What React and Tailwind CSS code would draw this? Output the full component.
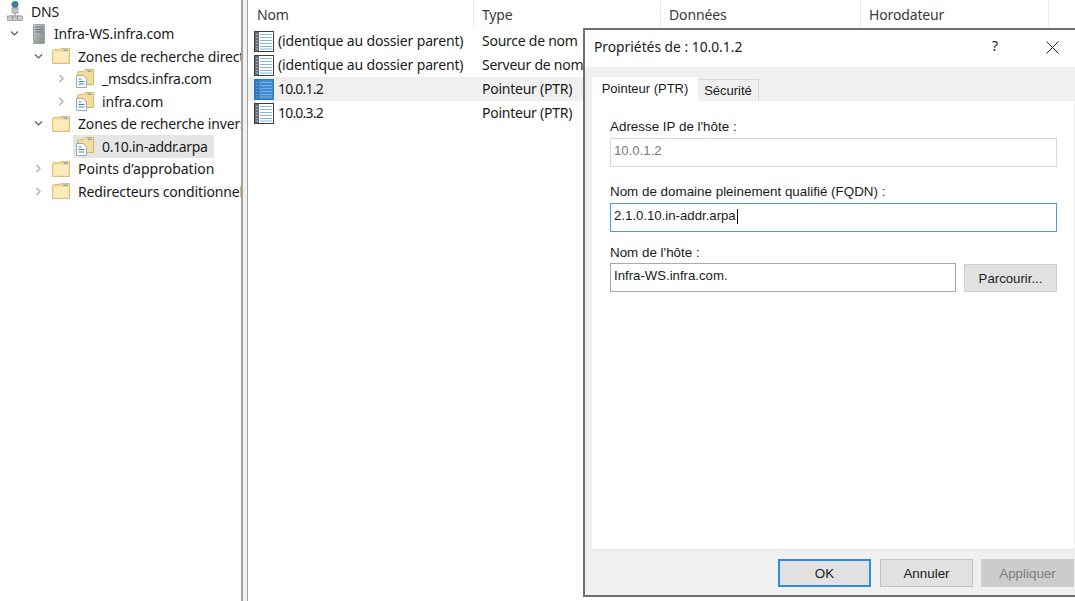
import React from 'react';

const DnsIcon = () => (
    <svg width="16" height="22" viewBox="0 0 16 22" className="shrink-0">
        <circle cx="8" cy="4.5" r="3.5" fill="#3f8f4e" />
        <path d="M5.5 3 Q8 1 10.5 3 L10 6 Q8 8 6 6 Z" fill="#2f7fc8" />
        <rect x="5" y="8" width="6" height="5" fill="#c3c7cc" stroke="#8a9097" strokeWidth="0.7" />
        <path d="M8 13v3M3 16h10" stroke="#8a9097" />
        <rect x="0.5" y="16" width="5" height="4.5" fill="#c9ccd0" stroke="#8a9097" strokeWidth="0.7" />
        <rect x="10.5" y="16" width="5" height="4.5" fill="#c9ccd0" stroke="#8a9097" strokeWidth="0.7" />
        <rect x="5.5" y="17" width="5" height="3.5" fill="#c9ccd0" stroke="#8a9097" strokeWidth="0.7" />
    </svg>
);

const ServerIcon = () => (
    <svg width="12" height="20" viewBox="0 0 12 20" className="shrink-0">
        <defs>
            <linearGradient id="srv" x1="0" x2="1" y1="0" y2="1">
                <stop offset="0" stopColor="#c9cdd0" />
                <stop offset="1" stopColor="#7f8488" />
            </linearGradient>
        </defs>
        <rect x="0.5" y="0.5" width="11" height="19" rx="0.5" fill="url(#srv)" stroke="#a0a5a9" />
        <path d="M2 3h8M2 5.5h8M2 8h8" stroke="#70757a" />
        <rect x="7.5" y="15.5" width="2.5" height="2.5" fill="#6fc23f" />
    </svg>
);

const Folder = () => (
    <svg width="18" height="16" viewBox="0 0 18 16" className="shrink-0">
        <path d="M0.5 3.5 Q0.5 1.5 2.5 1.5 H7 L9 0.5 H17.5 V15.5 H0.5 Z" fill="#f3d68e" stroke="#dfc07a" />
        <rect x="1.5" y="3.5" width="15" height="11" fill="#fcebbd" />
        <rect x="11.5" y="1.5" width="4" height="1.6" fill="#6fa7d6" />
    </svg>
);

const ZoneFolder = () => (
    <svg width="18" height="19" viewBox="0 0 18 19" className="shrink-0">
        <path d="M1.5 4.5 Q1.5 2.5 3.5 2.5 H7 L9 0.5 H17.5 V15.5 H1.5 Z" fill="#f6dc9c" stroke="#d8b566" />
        <rect x="11.5" y="1.5" width="4" height="1.5" fill="#6fa7d6" />
        <path d="M0.5 6.5 H7 L10.5 10 V18.5 H0.5 Z" fill="#ffffff" stroke="#9aa9b8" />
        <path d="M2.5 10h3M2.5 12.5h6M2.5 15h6" stroke="#3b83c4" />
    </svg>
);

const RecordIcon = ({ active }) => (
    <svg width="20" height="21" viewBox="0 0 20 21" className="shrink-0">
        <rect x="0.5" y="0.5" width="19" height="20" fill={active ? '#3f8ad0' : '#ffffff'} stroke={active ? '#2a78bd' : '#3a3f45'} />
        <rect x="1" y="1" width="4" height="19" fill={active ? '#2f77b8' : '#6b7076'} />
        <path d="M2 3.5h2M2 6.5h2M2 9.5h2M2 12.5h2M2 15.5h2M2 18h2" stroke={active ? '#5f9fd8' : '#a5a9ad'} />
        <path d="M6 3.5h12M6 6.5h12M6 9.5h12M6 12.5h12M6 15.5h12M6 18h12"
            stroke={active ? '#78b2e2' : '#86b6dc'} strokeWidth="1.2" />
    </svg>
);

const Chevron = ({ open }) => (
    <svg width="9" height="9" viewBox="0 0 9 9" className="shrink-0">
        {open
            ? <path d="M1 2.5 L4.5 6 L8 2.5" fill="none" stroke="#5b5b5b" strokeWidth="1.2" />
            : <path d="M2.5 1 L6 4.5 L2.5 8" fill="none" stroke="#a8a8a8" strokeWidth="1.2" />}
    </svg>
);

const treeRows = [
    { label: 'DNS', indent: 7, icon: <DnsIcon />, gap: 'gap-2' },
    { label: 'Infra-WS.infra.com', indent: 10, chevron: 'open', icon: <ServerIcon />, gap: 'gap-[9px]', chevGap: 'mr-[14px]' },
    { label: 'Zones de recherche directes', indent: 34, chevron: 'open', icon: <Folder />, gap: 'gap-2', chevGap: 'mr-[9px]' },
    { label: '_msdcs.infra.com', indent: 57, chevron: 'closed', icon: <ZoneFolder />, gap: 'gap-2', chevGap: 'mr-[10px]', track: 'tracking-[-0.3px]' },
    { label: 'infra.com', indent: 57, chevron: 'closed', icon: <ZoneFolder />, gap: 'gap-2', chevGap: 'mr-[10px]' },
    { label: 'Zones de recherche inversée', indent: 34, chevron: 'open', icon: <Folder />, gap: 'gap-2', chevGap: 'mr-[9px]' },
    { label: '0.10.in-addr.arpa', indent: 76, icon: <ZoneFolder />, gap: 'gap-2', selected: true, track: 'tracking-[-0.3px]' },
    { label: "Points d’approbation", indent: 34, chevron: 'closed', icon: <Folder />, gap: 'gap-2', chevGap: 'mr-[9px]', track: 'tracking-normal' },
    { label: 'Redirecteurs conditionnels', indent: 34, chevron: 'closed', icon: <Folder />, gap: 'gap-2', chevGap: 'mr-[9px]' },
];

const listRows = [
    { name: '(identique au dossier parent)', type: 'Source de nom' },
    { name: '(identique au dossier parent)', type: 'Serveur de nom' },
    { name: '10.0.1.2', type: 'Pointeur (PTR)', active: true, narrow: true },
    { name: '10.0.3.2', type: 'Pointeur (PTR)', narrow: true },
];

function Tree() {
    return (
        <div className="w-[241px] shrink-0 overflow-hidden whitespace-nowrap text-[14px] tracking-[-0.15px] text-[#1a1a1a]">
            {treeRows.map((row) => (
                <div key={row.label} className="relative flex h-[22.5px] items-center" style={{ paddingLeft: row.indent }}>
                    {row.selected && <div className="absolute left-[73px] top-0 h-[23px] w-[141px] bg-[#e5e5e5]" />}
                    {row.chevron && <span className={`flex ${row.chevGap}`}><Chevron open={row.chevron === 'open'} /></span>}
                    <span className={`relative flex items-center ${row.gap}`}>
                        {row.icon}
                        <span className={row.track}>{row.label}</span>
                    </span>
                </div>
            ))}
        </div>
    );
}

function RecordList() {
    return (
        <div className="min-w-0 flex-1 overflow-hidden whitespace-nowrap text-[14px] tracking-[-0.15px] text-[#1a1a1a]">
            <div className="flex h-[29px] items-center text-[#3a3a3a]">
                <div className="h-full w-[226px] border-r border-[#ececec] pl-[9px] leading-[30px]">Nom</div>
                <div className="h-full w-[187px] border-r border-[#ececec] pl-2 leading-[30px]">Type</div>
                <div className="h-full w-[200px] border-r border-[#ececec] pl-2 leading-[30px]">Données</div>
                <div className="h-full w-[188px] border-r border-[#ececec] pl-2 leading-[30px]">Horodateur</div>
            </div>
            {listRows.map((row, i) => (
                <div key={i} className={`flex h-6 items-center ${row.active ? 'bg-[#f0f0f0]' : ''}`}>
                    <div className="flex w-[226px] items-center gap-[4px] pl-[6px]">
                        <RecordIcon active={row.active} />
                        <span className={`pb-[2px] ${row.narrow ? 'tracking-[-0.8px]' : ''}`}>{row.name}</span>
                    </div>
                    <div className="pb-[2px] pl-2 tracking-[-0.25px]">{row.type}</div>
                </div>
            ))}
        </div>
    );
}

const fieldBase = 'flex h-[29px] items-center border bg-white px-[3px] pb-[3px] text-[13.2px]';

function PropertiesDialog() {
    return (
        <div className="absolute left-[583px] top-[28px] flex h-[569px] w-[493px] flex-col border-b-2 border-l-2 border-t-2 border-[#6f6f6f] bg-[#f0f0f0] font-['Liberation_Sans',sans-serif] text-[13.4px] text-[#1a1a1a]">
            <div className="flex h-[37px] shrink-0 items-center bg-white pb-[2px] pl-[9px] font-['Noto_Sans',sans-serif] text-[13.8px]">
                <span className="flex-1">Propriétés de : 10.0.1.2</span>
                <span className="mb-1 mr-[48px] text-[14px]">?</span>
                <svg width="13" height="13" viewBox="0 0 13 13" className="mr-[17px]">
                    <path d="M0.5 0.5 L12.5 12.5 M12.5 0.5 L0.5 12.5" stroke="#222" strokeWidth="1" />
                </svg>
            </div>

            <div className="flex flex-1 flex-col pl-[7px] pr-[2px]">
                <div className="mt-[10px] flex h-[24px] items-end text-[13px]">
                    <div className="z-10 -mb-px flex h-[25px] w-[106px] items-center justify-center bg-white pb-px">Pointeur (PTR)</div>
                    <div className="flex h-[22px] w-[61px] items-center justify-center border-r border-t border-[#d9d9d9] bg-[#f0f0f0]">Sécurité</div>
                </div>

                <div className="flex h-[449px] flex-col border-b border-[#e3e3e3] bg-white pb-0 pl-[18px] pr-[17px] pt-[17px]">
                    <label className="h-[20px] leading-[17px]">Adresse IP de l'hôte :</label>
                    <div className={`${fieldBase} border-[#d9d9d9] text-[#7a7a7a]`}>10.0.1.2</div>

                    <label className="mt-[16px] h-[20px] leading-[17px]">Nom de domaine pleinement qualifié (FQDN) :</label>
                    <div className={`${fieldBase} border-[#4a9ee0]`}>
                        2.1.0.10.in-addr.arpa<span className="ml-px inline-block h-[15px] w-px bg-black" />
                    </div>

                    <label className="mt-[12px] h-[19px] leading-[17px]">Nom de l'hôte :</label>
                    <div className="flex items-center gap-2">
                        <div className={`${fieldBase} w-[346px] border-[#a9a9a9]`}>Infra-WS.infra.com.</div>
                        <button className="h-[28px] w-[93px] border border-[#cfcfcf] bg-[#e1e1e1] pt-[2px] text-[13.2px]">Parcourir...</button>
                    </div>
                </div>

                <div className="mt-[9px] flex justify-end">
                    <button className="mr-[9px] h-[28px] w-[93px] border-2 border-[#2e8ddc] bg-[#e1e1e1] pt-[2px]">OK</button>
                    <button className="mr-2 h-[28px] w-[93px] border border-[#c4c4c4] bg-[#e1e1e1] pt-[2px]">Annuler</button>
                    <button className="h-[28px] w-[93px] bg-[#cccccc] pt-[2px] text-[#7d7d7d]">Appliquer</button>
                </div>
            </div>
        </div>
    );
}

export default function App() {
    return (
        <div className="relative flex h-[601px] w-[1075px] overflow-hidden bg-white font-['Noto_Sans',sans-serif]">
            <Tree />
            <div className="h-full w-[7px] shrink-0 border-l-2 border-r border-l-[#a0a0a0] border-r-[#a0a0a0] bg-[#f2f2f2]" />
            <RecordList />
            <PropertiesDialog />
        </div>
    );
}
